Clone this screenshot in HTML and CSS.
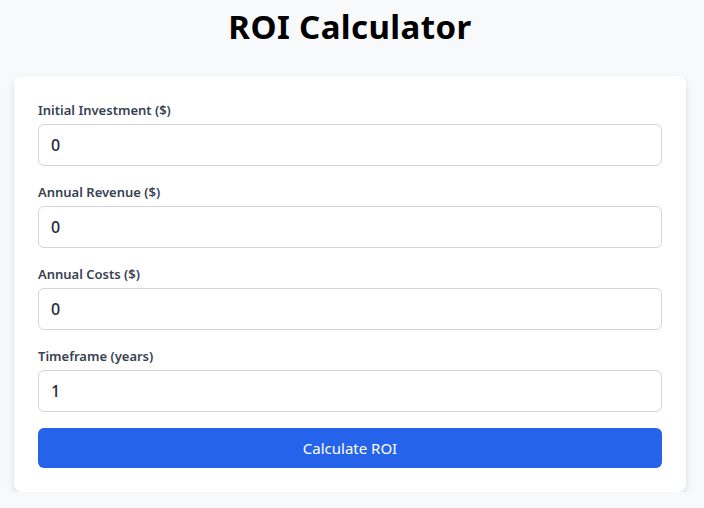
FILE: index.html
```html
<!DOCTYPE html>
<html lang="en">
<head>
<meta charset="utf-8">
<title>ROI Calculator</title>
<link rel="stylesheet" href="styles.css">
</head>
<body>
<main class="page">
  <h1 class="title">ROI Calculator</h1>
  <form class="card" onsubmit="return false">
    <div class="field">
      <label class="label" for="inv">Initial Investment ($)</label>
      <input class="input" id="inv" type="number" value="0">
    </div>
    <div class="field">
      <label class="label" for="rev">Annual Revenue ($)</label>
      <input class="input" id="rev" type="number" value="0">
    </div>
    <div class="field">
      <label class="label" for="cost">Annual Costs ($)</label>
      <input class="input" id="cost" type="number" value="0">
    </div>
    <div class="field">
      <label class="label" for="time">Timeframe (years)</label>
      <input class="input" id="time" type="number" value="1">
    </div>
    <button class="button" type="submit">Calculate ROI</button>
  </form>
</main>
</body>
</html>
```

FILE: styles.css
```css
* { box-sizing: border-box; }
html, body { margin: 0; padding: 0; }
body {
  background: #f8f9fb;
  font-family: "Noto Sans", "Open Sans", sans-serif;
  color: #111827;
}
.page {
  padding: 0 18px 0 14px;
}
.title {
  margin: 7px 0 29px;
  font-size: 33px;
  line-height: 40px;
  letter-spacing: 0.4px;
  font-weight: 700;
  text-align: center;
  color: #000;
}
.card {
  display: flex;
  flex-direction: column;
  background: #fff;
  border-radius: 8px;
  padding: 24px;
  box-shadow: 0 4px 10px rgba(0, 0, 0, 0.09), 0 1px 3px rgba(0, 0, 0, 0.06);
}
.field {
  display: flex;
  flex-direction: column;
  margin-bottom: 16px;
}
.label {
  font-size: 13px;
  line-height: 20px;
  font-weight: 600;
  color: #374151;
  margin-bottom: 4px;
}
.input {
  height: 42px;
  border: 1px solid #d1d5db;
  border-radius: 6px;
  padding: 0 12px;
  font-family: inherit;
  font-size: 16px;
  font-weight: 500;
  color: #1f2937;
  background: #fff;
  appearance: textfield;
  -moz-appearance: textfield;
}
.input::-webkit-outer-spin-button,
.input::-webkit-inner-spin-button { -webkit-appearance: none; margin: 0; }
.button {
  height: 40px;
  border: 0;
  border-radius: 6px;
  background: #2563eb;
  color: #fff;
  font-family: inherit;
  font-size: 15px;
}
```
